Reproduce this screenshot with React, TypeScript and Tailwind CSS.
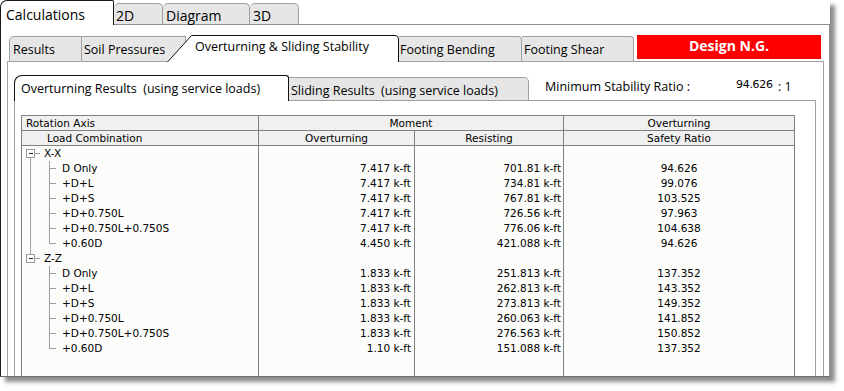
import React from "react";

type Row = { name: string; ot: string; rs: string; sr: string };
const groups: { axis: string; rows: Row[] }[] = [
  {
    axis: "X-X",
    rows: [
      { name: "D Only", ot: "7.417 k-ft", rs: "701.81 k-ft", sr: "94.626" },
      { name: "+D+L", ot: "7.417 k-ft", rs: "734.81 k-ft", sr: "99.076" },
      { name: "+D+S", ot: "7.417 k-ft", rs: "767.81 k-ft", sr: "103.525" },
      { name: "+D+0.750L", ot: "7.417 k-ft", rs: "726.56 k-ft", sr: "97.963" },
      { name: "+D+0.750L+0.750S", ot: "7.417 k-ft", rs: "776.06 k-ft", sr: "104.638" },
      { name: "+0.60D", ot: "4.450 k-ft", rs: "421.088 k-ft", sr: "94.626" },
    ],
  },
  {
    axis: "Z-Z",
    rows: [
      { name: "D Only", ot: "1.833 k-ft", rs: "251.813 k-ft", sr: "137.352" },
      { name: "+D+L", ot: "1.833 k-ft", rs: "262.813 k-ft", sr: "143.352" },
      { name: "+D+S", ot: "1.833 k-ft", rs: "273.813 k-ft", sr: "149.352" },
      { name: "+D+0.750L", ot: "1.833 k-ft", rs: "260.063 k-ft", sr: "141.852" },
      { name: "+D+0.750L+0.750S", ot: "1.833 k-ft", rs: "276.563 k-ft", sr: "150.852" },
      { name: "+0.60D", ot: "1.10 k-ft", rs: "151.088 k-ft", sr: "137.352" },
    ],
  },
];

function TreeLines() {
  const parts: React.ReactNode[] = [];
  groups.forEach((g, gi) => {
    const oy = gi * 105;
    parts.push(
      <g key={"g" + gi}>
        <rect x={4.5} y={oy + 3.5} width={8} height={8} fill="#fff" stroke="#9a9a9a" />
        <line x1={6.5} y1={oy + 7.5} x2={11} y2={oy + 7.5} stroke="#222" />
        <line x1={13} y1={oy + 7.5} x2={18} y2={oy + 7.5} stroke="#a0a0a0" />
        <line x1={27.5} y1={oy + 15} x2={27.5} y2={oy + 97.5} stroke="#a0a0a0" />
        {g.rows.map((_, ri) => (
          <line
            key={ri}
            x1={27.5}
            y1={oy + 15 * (ri + 1) + 7.5}
            x2={34}
            y2={oy + 15 * (ri + 1) + 7.5}
            stroke="#a0a0a0"
          />
        ))}
      </g>
    );
  });
  parts.push(<line key="root" x1={8.5} y1={11.5} x2={8.5} y2={108.5} stroke="#a0a0a0" />);
  return (
    <svg className="absolute left-0 top-0" width={60} height={215} shapeRendering="crispEdges">
      {parts}
    </svg>
  );
}

export default function App() {
  const allRows: { label: string; child: boolean; ot: string; rs: string; sr: string }[] = [];
  groups.forEach((g) => {
    allRows.push({ label: g.axis, child: false, ot: "", rs: "", sr: "" });
    g.rows.forEach((r) => allRows.push({ label: r.name, child: true, ot: r.ot, rs: r.rs, sr: r.sr }));
  });

  return (
    <div className="w-[844px] h-[391px] bg-white overflow-hidden font-['Open_Sans',sans-serif] text-black">
      <div className="w-[830px] h-[377px] flex flex-col bg-white shadow-[5px_5px_4px_rgba(0,0,0,0.45)]">
        {/* top tabs */}
        <div className="flex h-[25px] shrink-0">
          <div className="w-[114px] h-[25px] bg-white border border-b-0 border-[#1a1a1a] rounded-tl-[7px] rounded-tr-[2px] pl-[5px] text-[14px] leading-[27px]">
            Calculations
          </div>
          <div className="flex-1 flex items-end border-b border-[#8c8c8c]">
            <div className="w-[49px] h-[21px] bg-[#e6e6e6] border border-b-0 border-l-0 border-[#a0a0a0] rounded-t-[5px] pl-[2px] text-[14px] leading-[24px]">
              2D
            </div>
            <div className="w-[87px] h-[21px] bg-[#e6e6e6] border border-b-0 border-l-0 border-[#a0a0a0] rounded-t-[5px] pl-[3px] text-[14px] leading-[24px]">
              Diagram
            </div>
            <div className="w-[49px] h-[21px] bg-[#e6e6e6] border border-b-0 border-l-0 border-[#a0a0a0] rounded-t-[5px] pl-[3px] text-[14px] leading-[24px]">
              3D
            </div>
          </div>
        </div>

        {/* outer panel */}
        <div className="flex-1 min-h-0 overflow-hidden border-l border-r border-b border-l-[#1a1a1a] border-r-[#8c8c8c] border-b-[#707070] pt-[10px] pl-[6px] flex flex-col">
          <div className="w-[817px] flex-1 flex flex-col">
            {/* second-level tabs */}
            <div className="flex h-[27px] items-end shrink-0 text-[12.5px]">
              <div className="w-[2px] h-full border-b border-[#a0a0a0]" />
              <div className="w-[73px] h-[26px] bg-[#e6e6e6] border border-[#a0a0a0] rounded-tl-[5px] pl-[3px] leading-[25px]">
                Results
              </div>
              <div className="w-[104px] h-[26px] bg-[#e6e6e6] border border-l-0 border-[#a0a0a0] pl-[2px] leading-[25px] whitespace-nowrap overflow-hidden">
                Soil Pressures
              </div>
              <div className="relative w-[232px] h-[27px] ml-[-19px] z-10">
                <svg className="absolute left-0 top-0" width={232} height={27}>
                  <path d="M0.5 27 L24.5 0.5 L228 0.5 Q231.5 0.5 231.5 4 L231.5 27 Z" fill="#fff" stroke="none" />
                  <path d="M0.5 27 L24.5 0.5 L228 0.5 Q231.5 0.5 231.5 4 L231.5 27" fill="none" stroke="#111" />
                </svg>
                <div className="relative pl-[28px] leading-[24px] whitespace-nowrap">Overturning &amp; Sliding Stability</div>
              </div>
              <div className="w-[123px] h-[26px] bg-[#e6e6e6] border border-l-0 border-[#a0a0a0] rounded-tr-[4px] pl-[1px] leading-[25px] whitespace-nowrap">
                Footing Bending
              </div>
              <div className="w-[112px] h-[26px] bg-[#e6e6e6] border border-l-0 border-[#a0a0a0] rounded-tr-[4px] pl-[2px] leading-[25px] whitespace-nowrap">
                Footing Shear
              </div>
              <div className="flex-1 h-full border-b border-[#a0a0a0] flex items-start">
                <div className="ml-[3px] w-[184px] h-[24px] bg-[#ff0000] text-white font-bold text-[14px] leading-[22px] text-center">
                  Design N.G.
                </div>
              </div>
            </div>

            {/* panel 2 */}
            <div className="flex-1 min-h-0 border-l border-r border-[#a0a0a0] pt-[13px] pl-[6px] flex flex-col">
              {/* third-level tabs */}
              <div className="w-[802px] h-[26px] flex items-end shrink-0 text-[12.5px]">
                <div className="w-[275px] h-[26px] bg-white border border-b-0 border-[#111] rounded-tl-[8px] rounded-tr-[3px] pl-[6px] leading-[25px] whitespace-pre">
                  Overturning Results  (using service loads)
                </div>
                <div className="w-[240px] h-[24px] bg-[#e6e6e6] border border-l-0 border-[#a0a0a0] rounded-tr-[5px] pl-[2px] leading-[25px] whitespace-pre">
                  Sliding Results  (using service loads)
                </div>
                <div className="flex-1 h-full border-b border-[#a0a0a0] flex items-center whitespace-nowrap">
                  <span className="ml-[16px] w-[191px]">Minimum Stability Ratio :</span>
                  <span className="w-[42px] text-[11px] mt-[-5px] font-['DejaVu_Sans',sans-serif] tracking-[-0.3px]">94.626</span>
                  <span className="whitespace-pre">: 1</span>
                </div>
              </div>

              {/* panel 3 */}
              <div className="w-[802px] flex-1 min-h-0 border-l border-r border-[#a0a0a0] pt-[14px] pl-[6px] flex flex-col">
                <div className="w-[774px] flex-1 border border-b-0 border-[#808080] flex flex-col font-['DejaVu_Sans',sans-serif] text-[10.5px] leading-[14px]">
                  <div className="flex h-[15px] border-b border-[#808080] bg-[#f0f0f0] shrink-0">
                    <div className="w-[237px] border-r border-[#808080] pl-[4px]">Rotation Axis</div>
                    <div className="w-[305px] border-r border-[#808080] text-center">Moment</div>
                    <div className="flex-1 text-center">Overturning</div>
                  </div>
                  <div className="flex h-[15px] border-b border-[#808080] bg-[#f0f0f0] shrink-0">
                    <div className="w-[237px] border-r border-[#808080] pl-[25px]">Load Combination</div>
                    <div className="w-[156px] border-r border-[#808080] text-center">Overturning</div>
                    <div className="w-[149px] border-r border-[#808080] text-center">Resisting</div>
                    <div className="flex-1 text-center">Safety Ratio</div>
                  </div>
                  <div className="flex flex-1 bg-[#fcfcfa] leading-[15px]">
                    <div className="w-[237px] border-r border-[#808080] relative flex flex-col">
                      <TreeLines />
                      {allRows.map((r, i) => (
                        <div key={i} className={"h-[15px] whitespace-nowrap " + (r.child ? "pl-[40px]" : "pl-[22px]")}>
                          {r.label}
                        </div>
                      ))}
                    </div>
                    <div className="w-[156px] border-r border-[#808080] flex flex-col">
                      {allRows.map((r, i) => (
                        <div key={i} className="h-[15px] text-right pr-[3px] whitespace-nowrap">
                          {r.ot}
                        </div>
                      ))}
                    </div>
                    <div className="w-[149px] border-r border-[#808080] flex flex-col">
                      {allRows.map((r, i) => (
                        <div key={i} className="h-[15px] text-right pr-[2px] whitespace-nowrap">
                          {r.rs}
                        </div>
                      ))}
                    </div>
                    <div className="flex-1 flex flex-col">
                      {allRows.map((r, i) => (
                        <div key={i} className="h-[15px] text-center whitespace-nowrap">
                          {r.sr}
                        </div>
                      ))}
                    </div>
                  </div>
                </div>
              </div>
            </div>
          </div>
        </div>
      </div>
    </div>
  );
}
